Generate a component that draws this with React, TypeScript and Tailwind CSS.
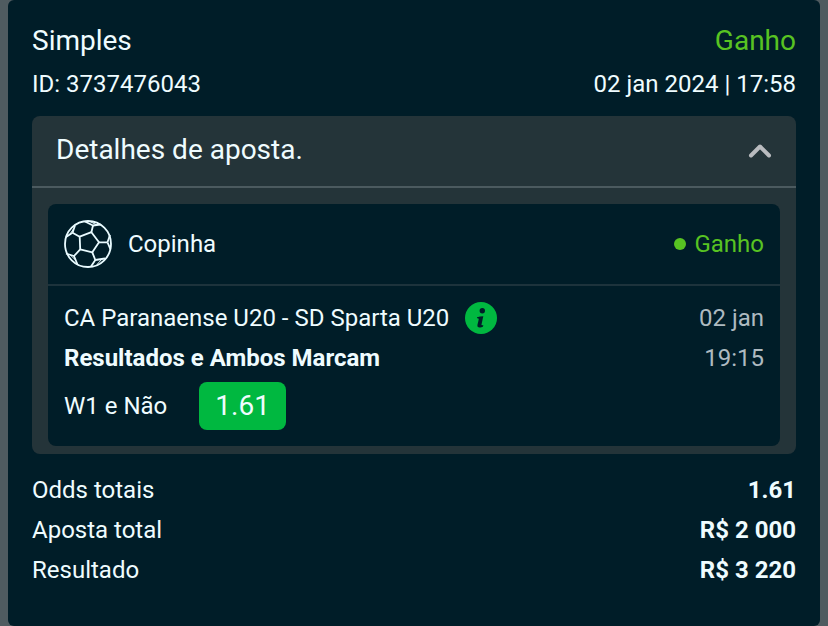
import type { ReactNode } from "react";

function SoccerBall() {
  return (
    <svg
      viewBox="0 0 48 48"
      className="size-12 shrink-0"
      fill="none"
      stroke="#e9fbff"
      strokeWidth="1.8"
      strokeLinejoin="round"
      aria-hidden="true"
    >
      <circle cx="24" cy="24" r="23" />
      <path d="M15.7 16.7 27.400 12.200 35 22.300 28.300 32.300 16.200 29.400z" />
      <path d="M15.700 16.700 8.500 12.700M27.400 12.200 29 5.500M35 22.300h8.500M28.300 32.300l3 7.700M16.200 29.400 10 36" />
      <path d="M21 1.500 29 5.500l7.500-1M8.500 12.700 11 5.500M8.500 12.700 2 17M43.500 22.300 46 15M43.500 22.300l3 7" />
      <path d="M31.300 40l9.700-1.500M31.300 40l-4.300 6.500M10 36l-8-2.500M10 36l3.500 8.500" />
      <path d="M26 1.500l6.500 3.300M5.500 14.700 9.500 9M33 44.500l5-5.500M6 34.700l5.700 5.500" strokeWidth="1" />
    </svg>
  );
}

function InfoIcon() {
  return (
    <svg viewBox="0 0 32 32" className="size-8" aria-hidden="true">
      <circle cx="16" cy="16" r="16" fill="#00b840" />
      <circle cx="17.300" cy="8.800" r="2.700" fill="#001d28" />
      <path
        d="M12 15.200c2-.500 4-.900 6.300-.900l-1.800 8.200c-.200 1 .600 1 1.800.400l-.300 1.500c-1.600 1.200-5.700 2.200-5.600-.800.100-1.700 1-4.400 1.300-6.200.100-.900-.500-1.100-1.700-1.100z"
        fill="#001d28"
      />
    </svg>
  );
}

function TotalRow({ label, children }: { label: string; children: ReactNode }) {
  return (
    <div className="flex items-center justify-between">
      <dt>{label}</dt>
      <dd className="font-bold">{children}</dd>
    </div>
  );
}

export default function App() {
  return (
    <div className="bg-[#4f5b60] px-2 font-[Roboto,sans-serif] text-2xl leading-10 text-[#effcff]">
      <main className="rounded-md bg-[#001d28] px-6 pt-5 pb-9">
        <header>
          <div className="flex items-center justify-between text-[28px] leading-[42px]">
            <h1>Simples</h1>
            <span className="text-[#58c322]">Ganho</span>
          </div>
          <div className="mt-0.5 flex items-center justify-between">
            <span>ID: 3737476043</span>
            <time dateTime="2024-01-02T17:58">02 jan 2024 | 17:58</time>
          </div>
        </header>

        <section className="mt-3 rounded-lg bg-[#243439]">
          <button
            type="button"
            aria-expanded="true"
            className="flex w-full items-center justify-between border-b-2 border-[#4b5a5f] px-6 pt-3.5 pb-4 text-[28px]"
          >
            <span>Detalhes de aposta.</span>
            <svg viewBox="0 0 24 16" className="h-4 w-6" fill="none" aria-hidden="true">
              <path
                d="M3 13.500 12 4.500l9 9"
                stroke="#b9bbbf"
                strokeWidth="4"
                strokeLinecap="round"
                strokeLinejoin="round"
              />
            </svg>
          </button>

          <div className="px-4 pt-4 pb-2">
            <article className="rounded-lg bg-[#001d28]">
              <div className="flex items-center gap-4 border-b-2 border-[#1d333c] p-4">
                <SoccerBall />
                <h2>Copinha</h2>
                <span className="ml-auto flex items-center gap-2 text-[#58c322]">
                  <span className="size-3 rounded-full bg-[#58c322]" />
                  Ganho
                </span>
              </div>

              <div className="flex justify-between gap-4 px-4 pt-3 pb-4">
                <div>
                  <div className="flex items-center gap-4">
                    <span>CA Paranaense U20 - SD Sparta U20</span>
                    <button type="button" aria-label="Informações">
                      <InfoIcon />
                    </button>
                  </div>
                  <p className="font-bold">Resultados e Ambos Marcam</p>
                  <div className="mt-1 flex items-center gap-8">
                    <span>W1 e Não</span>
                    <span className="rounded-lg bg-[#00b840] px-4 py-1 text-[28px]">1.61</span>
                  </div>
                </div>
                <time dateTime="2024-01-02T19:15" className="shrink-0 text-right text-[#aebac0]">
                  02 jan
                  <br />
                  19:15
                </time>
              </div>
            </article>
          </div>
        </section>

        <dl className="mt-4">
          <TotalRow label="Odds totais">1.61</TotalRow>
          <TotalRow label="Aposta total">R$ 2 000</TotalRow>
          <TotalRow label="Resultado">R$ 3 220</TotalRow>
        </dl>
      </main>
    </div>
  );
}
